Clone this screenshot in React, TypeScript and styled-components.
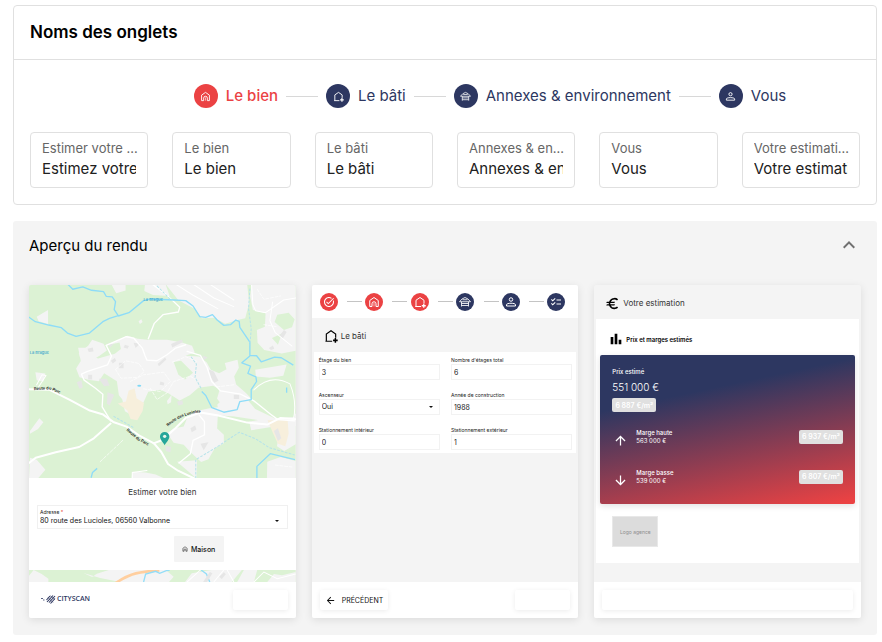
import React from "react";
import styled, { createGlobalStyle } from "styled-components";
import {
  MdArrowBack,
  MdArrowDownward,
  MdArrowUpward,
  MdBarChart,
  MdChecklist,
  MdEuro,
  MdKeyboardArrowUp,
  MdTaskAlt,
} from "react-icons/md";

const NAVY = "#2d3761";
const RED = "#eb4243";
const LINE = "#e0e0e0";
const GREY = "#f4f4f4";

const GlobalStyle = createGlobalStyle`
  *, *::before, *::after { box-sizing: border-box; }
  body { margin: 0; background: #fff; color: #000; }
  body, button, input, select { font-family: Inter, "Open Sans", sans-serif; }
  h1, h2, h3, p, dl, dd, dt, ol { margin: 0; padding: 0; }
`;

const Page = styled.main`
  display: flex;
  flex-direction: column;
  gap: 16px;
  padding: 5px 5px 7px 13px;
`;

/* ---------- Tab names ---------- */

const Card = styled.section`
  border: 1px solid ${LINE};
  border-radius: 4px;
  background: #fff;
`;

const CardTitle = styled.h1`
  padding: 0 16px;
  border-bottom: 1px solid ${LINE};
  font-size: 17px;
  line-height: 53px;
  font-weight: 600;
`;

const CardBody = styled.div`
  padding: 24px 16px 16px;
`;

const Steps = styled.ol`
  display: flex;
  align-items: center;
  justify-content: center;
  gap: 8px;
  padding-left: 90px;
  margin-bottom: 24px;
  list-style: none;
`;

const Step = styled.li<{ $active?: boolean }>`
  display: flex;
  align-items: center;
  gap: 8px;
  color: ${(p) => (p.$active ? RED : NAVY)};
  font-size: 15px;
  line-height: 24px;
  font-weight: ${(p) => (p.$active ? 500 : 400)};
  white-space: nowrap;

  &:not(:first-child)::before {
    content: "";
    width: 32px;
    height: 1px;
    background: #d8d8d8;
  }
`;

const Dot = styled.span<{ $size: number; $red?: boolean }>`
  display: flex;
  flex: none;
  align-items: center;
  justify-content: center;
  width: ${(p) => p.$size}px;
  height: ${(p) => p.$size}px;
  border-radius: 50%;
  color: #fff;
  background: ${(p) => (p.$red ? RED : NAVY)};
`;

const Fields = styled.div`
  display: grid;
  grid-template-columns: repeat(6, minmax(0, 1fr));
  gap: 24px;
`;

const TabField = styled.label`
  display: flex;
  flex-direction: column;
  height: 56px;
  padding: 6px 11px;
  border: 1px solid ${LINE};
  border-radius: 4px;
`;

const TabLabel = styled.span`
  margin-right: -3px;
  overflow: hidden;
  color: #666;
  font-size: 13px;
  line-height: 19px;
  white-space: nowrap;
  text-overflow: ellipsis;
`;

const TabInput = styled.input`
  width: 100%;
  height: 20px;
  padding: 0;
  border: 0;
  outline: 0;
  background: transparent;
  color: #212121;
  font-size: 15px;
`;

/* ---------- Preview panel ---------- */

const Panel = styled.section`
  padding: 0 16px 17px;
  border-radius: 3px;
  background: ${GREY};
`;

const PanelHeader = styled.h2`
  font-size: 15px;
  font-weight: 400;
`;

const PanelToggle = styled.button`
  display: flex;
  align-items: center;
  justify-content: space-between;
  width: 100%;
  height: 48px;
  padding: 0;
  border: 0;
  background: none;
  color: #000;
  font-size: 15px;
  font-weight: 400;
  cursor: pointer;

  svg { color: #707070; }
`;

const Previews = styled.div`
  display: grid;
  grid-template-columns: repeat(3, minmax(0, 1fr));
  gap: 16px;
  padding-top: 16px;
`;

const Phone = styled.article`
  display: flex;
  flex-direction: column;
  min-height: 333px;
  border-radius: 2px;
  background: ${GREY};
  box-shadow: 0 2px 8px rgba(0, 0, 0, 0.1);
  overflow: hidden;
`;

const PhoneFooter = styled.footer`
  display: flex;
  align-items: center;
  justify-content: space-between;
  height: 36px;
  margin-top: auto;
  padding: 0 8px;
  background: #fff;
`;

const SoftButton = styled.button<{ $width?: string }>`
  display: flex;
  align-items: center;
  gap: 6px;
  width: ${(p) => p.$width ?? "auto"};
  height: 20px;
  padding: 0 5px;
  border: 0;
  border-radius: 2px;
  background: #fff;
  box-shadow: 0 1px 5px rgba(0, 0, 0, 0.08);
  color: #111;
  font-size: 7px;
`;

const MapTop = styled.svg`
  display: block;
  width: 100%;
  height: 193px;
`;

const MapStrip = styled.svg`
  display: block;
  width: 100%;
  height: 12px;
`;

const AddressForm = styled.div`
  display: flex;
  flex-direction: column;
  height: 92px;
  padding: 7px 8px 8px;
  background: #fff;
`;

const AddressTitle = styled.h3`
  color: #333;
  font-size: 8px;
  line-height: 14px;
  font-weight: 400;
  text-align: center;
`;

const AddressField = styled.label`
  display: grid;
  height: 24px;
  margin: 6px 0 7px;
  padding: 2px;
  border: 1px solid #f0f0f0;
  color: #222;
  font-size: 5px;
  line-height: 8px;

  em { color: ${RED}; font-style: normal; }
`;

const SelectWrap = styled.span`
  display: flex;
  align-items: center;

  svg { flex: none; margin-right: 6px; }
`;

const BareSelect = styled.select`
  flex: 1;
  min-width: 0;
  padding: 0;
  border: 0;
  outline: 0;
  appearance: none;
  background: transparent;
  color: #111;
  font-size: 7px;
  line-height: 10px;
`;

const TypeButton = styled.button`
  display: flex;
  align-items: center;
  justify-content: center;
  align-self: flex-end;
  gap: 3px;
  width: 50px;
  height: 27px;
  margin-right: 64px;
  padding: 0;
  border: 0;
  border-radius: 1px;
  background: ${GREY};
  color: #111;
  font-size: 7px;
  font-weight: 500;
`;

const Brand = styled.span`
  display: flex;
  align-items: center;
  gap: 1px;
  padding: 0 0 3px 4px;
  color: ${NAVY};
  font-family: "Open Sans", sans-serif;
  font-size: 7px;
  line-height: 10px;
  font-weight: 600;
`;

const MiniSteps = styled.ol`
  display: flex;
  align-items: center;
  justify-content: space-between;
  height: 33px;
  padding: 0 13px 0 8px;
  background: #fff;
  list-style: none;
`;

const MiniLine = styled.li`
  width: 15px;
  height: 1px;
  margin-left: 6px;
  background: #c4c4c4;
`;

const PhoneTitle = styled.h3<{ $wide?: boolean }>`
  display: flex;
  align-items: center;
  gap: 3px;
  height: 34px;
  padding: 2px ${(p) => (p.$wide ? 11 : 12)}px 0;
  color: #333;
  font-size: 8px;
  font-weight: 400;

  svg { color: #000; }
`;

const MiniForm = styled.div`
  display: grid;
  grid-template-columns: 1fr 1fr;
  gap: 11px;
  margin: 0 2px;
  padding: 4px 4px 3px 5px;
  background: #fff;
`;

const MiniField = styled.label`
  display: grid;
  grid-template-rows: 8px 16px;
  color: #222;
  font-size: 5px;
  line-height: 8px;
`;

const MiniBox = styled.span`
  display: flex;
  align-items: center;
  min-width: 0;
  padding: 0 2px;
  border: 1px solid #f2f2f2;

  svg { flex: none; margin-right: 4px; }
`;

const MiniInput = styled.input`
  width: 100%;
  height: 12px;
  padding: 0;
  border: 0;
  outline: 0;
  background: transparent;
  color: #222;
  font-size: 7px;
`;

const Report = styled.div`
  margin: 0 2px;
  padding: 0 4px 16px;
  background: #fff;
`;

const ReportTitle = styled.h4`
  display: flex;
  align-items: center;
  gap: 2px;
  height: 36px;
  margin: 0;
  padding: 4px 8px 0;
  font-size: 6px;
  font-weight: 600;
`;

const PriceCard = styled.div`
  height: 149px;
  padding: 12px;
  border-radius: 2px;
  background: linear-gradient(168deg, ${NAVY} 28%, ${RED} 98%);
  box-shadow: 0 2px 6px rgba(0, 0, 0, 0.12);
  color: #fff;
`;

const PriceLabel = styled.p`
  font-size: 6px;
  line-height: 10px;
  font-weight: 500;
`;

const Price = styled.p`
  font-size: 10px;
  line-height: 21px;
  font-weight: 300;
`;

const Badge = styled.span`
  display: flex;
  align-items: center;
  justify-content: center;
  width: 44px;
  height: 14px;
  border-radius: 2px;
  background: #e0e0e0;
  color: #fff;
  font-size: 7px;
  font-weight: 600;
  white-space: nowrap;
`;

const Margins = styled.div`
  display: grid;
  gap: 24px;
  padding-top: 13px;
`;

const Margin = styled.div`
  display: grid;
  grid-template-columns: 24px 1fr auto;
  align-items: center;
  height: 16px;
  font-size: 6px;
  line-height: 8px;

  > svg { margin: 8px 0 0 1px; }
  strong { display: block; font-weight: 500; }
`;

const AgencyLogo = styled.div`
  display: flex;
  align-items: center;
  justify-content: center;
  width: 46px;
  height: 31px;
  margin: 12px 0 0 12px;
  border: 1px solid #e8e8e8;
  background: #dcdcdc;
  color: #8d8d8d;
  font-size: 5px;
`;

/* ---------- Icons ---------- */

type IconProps = { size: number };

const Glyph = ({ size, children }: IconProps & { children: React.ReactNode }) => (
  <svg
    width={size}
    height={size}
    viewBox="0 0 24 24"
    fill="none"
    stroke="currentColor"
    strokeWidth="2"
    aria-hidden="true"
  >
    {children}
  </svg>
);

const HouseIcon = ({ size }: IconProps) => (
  <Glyph size={size}>
    <path d="M3.500 21V9L12 3l8.500 6v12H16v-5.500a4 4 0 0 0-8 0V21z" />
    <path d="M12 14v7" strokeWidth="1.200" />
  </Glyph>
);

const HousePlusIcon = ({ size }: IconProps) => (
  <Glyph size={size}>
    <path d="M14 21H2.500M4 21V8.500L12 3l8 5.500V15" />
    <path d="M19.500 15.500v8M15.500 19.500h8" strokeWidth="2.600" />
  </Glyph>
);

const AnnexIcon = ({ size }: IconProps) => (
  <Glyph size={size}>
    <path d="M1 11.500 6 6l6-3 6 3 5 5.500H1zM5 11.500V21M19 11.500V21M5 15h14M5 19h14M7 7.500h10" strokeWidth="1.700" />
  </Glyph>
);

const PersonIcon = ({ size }: IconProps) => (
  <Glyph size={size}>
    <circle cx="12" cy="7" r="3.500" />
    <path d="M3 20v-2.500c0-2 4-3 9-3s9 1 9 3V20z" />
  </Glyph>
);

const Caret = () => (
  <svg width="4" height="2" viewBox="0 0 4 2" aria-hidden="true">
    <path d="M0 0h4L2 2z" fill="#111" />
  </svg>
);

const BrandMark = () => (
  <svg width="15" height="10" viewBox="0 0 15 10" aria-hidden="true" stroke={NAVY} fill="none">
    <path d="M0 4.500h2M2 6h1.500" strokeWidth="0.800" />
    <path d="M5.500 6 9 2M6 8l6-6.500M8 8.500l6-6.500M9.500 9.500 14 4.500" strokeWidth="1.100" />
    <path d="m7 3.500 5 5M9 1.500l5 4" strokeWidth="0.500" />
  </svg>
);

/* ---------- Map ---------- */

const AreaMap = () => (
  <MapTop viewBox="27 30 798 580" preserveAspectRatio="xMidYMid slice" role="img" aria-label="Carte de Valbonne">
    <defs>
      <path id="road-west" d="M42 346L88 343L128 360" />
      <path id="road-park" d="M318 466L350 494L392 517" />
      <path id="road-lucioles" d="M443 455Q480 418 548 411" />
    </defs>
    <rect x="27" y="30" width="798" height="580" fill="#dcf2d4" />
    <g fill="#f4f4f4">
      <path d="M252 213l40-16 30-14 30 9 28 3h60l45 8 30 10 8 20-28 10 42 2 22 18 12 22 25 10 22-12-5-18 38-10 4 24-14 26 6 24 30 26 42 44 40 12 98 8v18l-45 22-50-2-40-20-80-12-50-4-2 40 20 18v26l-28 16-18 32-22 8-32-30-20-22-30-6-20-28 20-14 30-6 12-30 24-16 38-8 28-4-4-20 10-34-20-10-44 6-26 22-30 16-34-22-24-10-36 6-22 48-20 26-28-16-8-36-10-12-6-42-38-24-16 24-32-4-26-8-10-26 14-22-8-40h44l2 28 14 4 50-14 18-14-4-20z" />
      <path d="M176 235l28-22 12-18 34 12 10 20-22 16-26 16-32-10z" />
      <path d="M437 30h243l6 55-12 46-20 4-40 12-32-18-38 2-20-28-50-26zM693 30h132v198l-42 8-52-10-20-22-2-38 24-10 2-40-38-10-8-40z" />
      <path d="M374 30h62l12 34-50-3-26-12zM274 30h42v18l-28 8zM50 126l34-20v42l-28-8zM355 140l8-6 4 8-8 6zM46 292l30 4-6 24-20-4z" />
      <path d="M30 468l28-38 12 12-16 20-24 14zM30 548l20 6 26 30-22 26H27zM704 285l94-16-10 34-40 6-42-4zM780 450l45-22v80l-34 20-22-14zM740 560l40-14 45 12v52h-86zM686 440l60-10 6 26-60 10z" />
      <path d="M440 378l14-18-2 22-10 6zM336 590l40 2 30 6 26 12h-98zM470 560l60-4-2 54z" />
    </g>
    <g fill="#dcf2d4">
      <path d="M704 350l28-30 50-2 32 28 8 80-60 4-58-28-20-24z" />
      <path d="M770 120l34-6 18 20-8 24-24 8-28-24zM460 262l22-4 36 36-24 20-20-14zM548 350l20-8 30 40-20 18-36-20zM754 190l30-14-12 34z" />
    </g>
    <g fill="#f7efdc">
      <path d="M325 348l18-8 6 30 22 14-4 24-16 28-20-4-10-26-28-20 24-6z" />
      <path d="M741 436h60l3 40-10 38-22-8-14-30z" />
    </g>
    <g fill="#e6e6e6">
      <path d="M452 208l32-14 4 8-32 16zM314 210l12 4-4 8-12-4zM262 206l18 2-10 10zM340 204l20 2-14 14zM412 268l22-20 4 6-22 20zM296 264h14v16h-14zM272 258l12-8 4 8-10 8zM204 300h12v14h-12zM170 322l14-6 4 22-10 4zM236 312h24l8 20-16 2zM566 284l14 6 14 28-12 6-16-22zM546 242l16 6-12 8zM640 360h16v12h-16zM262 352l20 8-14 32-8-6zM420 320l12 4-2 8-12-2zM540 506l24-4-14 24zM776 184l14-18 8 6-12 20zM745 220l12-8 4 10-10 4zM436 512l16 4-2 16-14-4zM470 380l16-4 2 12-14 4zM510 460l14-8 4 12-14 8zM202 222l16-4 2 12-14 2zM760 468l12-8 10 30-10 8z" />
    </g>
    <g fill="none" stroke="#fff" strokeLinejoin="round" strokeLinecap="round">
      <path strokeWidth="6" d="M27 343l62 2 60 30 60 32 40 12 30 22 40 14 40 28 42 22 22 26 20 36 30 20 50 24" />
      <path strokeWidth="6" d="M27 564l20-16 60-16 70-16 44-26 50-44M400 505l26-10 40-36 30-30 44-16 50 8 90 22 60 6 40-20 66 6" />
      <path strokeWidth="4" d="M262 270l-60 20-18 8 8 18 34 24 22 18-2 38 16 26 10 16M262 270l12-26-16-32 60-26 22 4 26 30 8 22 6 14 30 2 30-18 26-20 30-10M500 230l40 12 20 36 14 42 26 28 60 10 40 20 50 40 22 16 50 4M398 30l40 30 40 38-4 14-46 8-26 26-18 46M536 420l16 20v40l-34 16-8 40-34 28" />
      <path strokeWidth="3" d="M468 30l50 32 74 40M520 30l60 40 60 26M570 30l70 46M693 30l4 60 8 18 30 6 20-14 34-24 36-6M756 82l-8 56 16 36 50 40M700 345q50-50 108-18 22 54 10 108M50 330l16-30 12 2-22 34M336 610v-18l44-6" />
      <path strokeWidth="2" strokeDasharray="9 5" d="M286 284l30-26 40 8 16 24-20 18-50 2zM330 320l40-20 60-8 20 28-30 30-50-8M390 340l20 34 30-20 20-34 50-16 20 14M456 262l40-16 34 14M640 330l-50 6M710 44l20 30 50-10M730 150l40 6M240 560l70-66M764 570l50 6" />
    </g>
    <g fill="none" stroke="#8edcf8" strokeWidth="4" strokeLinejoin="round">
      <path d="M144 30l14 14 30-7 26 10 36 4 8 14 18 2 10 14-4 24 12 18-26 8-20 10-40 34-40 10-26-10-18-16-38-8-40-10-20-14M294 124l32-10 44-36 20-5 70 3 36 2 22 16 20 32 18 2 20-8 14 16 20 16 20-2 16-14 10 4 2 18 30 44v40l20 1 14 18 40-14 20 2 36 22M688 244l-24 20 26 10-8 22 24 10 2 14-16 24v30l-34 6-8 24-40 8-36-14-18-36-12-12" />
      <path d="M709 610v-36l40-38 74 18M213 608l4-16 14-12M798 338v16" />
    </g>
    <g fill="none" stroke="#b5e3ea" strokeWidth="3" strokeDasharray="8 4">
      <path d="M688 42l-4 60 8 60-4 50M512 246l16 22-4 40 20 36M280 424l60 34M526 610v-56l60-36 70-46 50 20 40 26 76 22M410 34l40 40" />
    </g>
    <ellipse cx="357" cy="333" rx="6" ry="3" fill="#7fd8f6" />
    <g fontFamily="Inter, sans-serif" fontSize="12" fontWeight="600">
      <g fill="#222">
        <text><textPath href="#road-west">Route du Parc</textPath></text>
        <text><textPath href="#road-park">Route du Parc</textPath></text>
        <text><textPath href="#road-lucioles">Route des Lucioles</textPath></text>
      </g>
      <g fill="#3aa5cc" fontWeight="500">
        <text x="370" y="80">La Brague</text>
        <text x="29" y="238">La Brague</text>
      </g>
    </g>
    <path d="M433 511c-5-10-14-16-14-27a14 13 0 0 1 28 0c0 11-9 17-14 27z" fill="#26a69a" />
    <circle cx="433" cy="484" r="5" fill="#e9f6ea" />
  </MapTop>
);

const LowerMap = () => (
  <MapStrip viewBox="27 301 798 36" preserveAspectRatio="xMidYMid slice" aria-hidden="true">
    <rect x="27" y="301" width="798" height="36" fill="#dcf2d4" />
    <path fill="#f4f4f4" d="M27 318l14-17 24 12 20 14v10H27zM190 310l26 12 14-10 36-11h170l24 20-14 16H300l-60-12zM494 337l20-26 60-10h90l-30 36zM670 301h40l-10 36h-50zM740 337l20-24 24 4 41-10v30z" />
    <path fill="none" stroke="#ffcf9f" strokeWidth="8" d="M285 341q36-24 62-30t70-9" />
    <path fill="none" stroke="#93ddf7" strokeWidth="4" d="M370 337l6-24 30-8 12 6 20-8 10-2M542 301l16 12 10 24" />
    <path fill="none" stroke="#fff" strokeWidth="3" d="M500 337l40-36M580 337l30-36M620 301l20 36M700 337l30-30 40 20 55-14" />
    <path fill="#e6e6e6" d="M548 337l20-30 8 4-16 26zM596 322l14-14 6 6-12 14z" />
  </MapStrip>
);

/* ---------- Data ---------- */

const steps = [
  { label: "Le bien", Icon: HouseIcon },
  { label: "Le bâti", Icon: HousePlusIcon },
  { label: "Annexes & environnement", Icon: AnnexIcon },
  { label: "Vous", Icon: PersonIcon },
];

const tabFields = [
  ["Estimer votre bien", "Estimez votre bien"],
  ["Le bien", "Le bien"],
  ["Le bâti", "Le bâti"],
  ["Annexes & environnement", "Annexes & environnement"],
  ["Vous", "Vous"],
  ["Votre estimation", "Votre estimation"],
];

const miniSteps = [MdTaskAlt, HouseIcon, HousePlusIcon, AnnexIcon, PersonIcon, MdChecklist];

const buildingFields = [
  { label: "Étage du bien", value: "3" },
  { label: "Nombre d'étages total", value: "6" },
  { label: "Ascenseur", value: "Oui", select: true },
  { label: "Année de construction", value: "1988" },
  { label: "Stationnement intérieur", value: "0" },
  { label: "Stationnement extérieur", value: "1" },
];

const margins = [
  { label: "Marge haute", price: "563 000 €", rate: "6 937 €/m²", Icon: MdArrowUpward },
  { label: "Marge basse", price: "539 000 €", rate: "6 807 €/m²", Icon: MdArrowDownward },
];

export default function App() {
  return (
    <>
      <GlobalStyle />
      <Page>
        <Card>
          <CardTitle>Noms des onglets</CardTitle>
          <CardBody>
            <Steps>
              {steps.map(({ label, Icon }, i) => (
                <Step key={label} $active={i === 0}>
                  <Dot $size={24} $red={i === 0}>
                    <Icon size={11} />
                  </Dot>
                  {label}
                </Step>
              ))}
            </Steps>
            <Fields>
              {tabFields.map(([label, value]) => (
                <TabField key={label}>
                  <TabLabel>{label}</TabLabel>
                  <TabInput defaultValue={value} />
                </TabField>
              ))}
            </Fields>
          </CardBody>
        </Card>

        <Panel>
          <PanelHeader>
            <PanelToggle aria-expanded="true">
              Aperçu du rendu
              <MdKeyboardArrowUp size={24} />
            </PanelToggle>
          </PanelHeader>
          <Previews>
            <Phone>
              <AreaMap />
              <AddressForm>
                <AddressTitle>Estimer votre bien</AddressTitle>
                <AddressField>
                  <span>
                    Adresse <em>*</em>
                  </span>
                  <SelectWrap>
                    <BareSelect>
                      <option>80 route des Lucioles, 06560 Valbonne</option>
                    </BareSelect>
                    <Caret />
                  </SelectWrap>
                </AddressField>
                <TypeButton>
                  <HouseIcon size={6} />
                  Maison
                </TypeButton>
              </AddressForm>
              <LowerMap />
              <PhoneFooter>
                <Brand>
                  <BrandMark />
                  CITYSCAN
                </Brand>
                <SoftButton $width="55px" aria-label="Suivant" />
              </PhoneFooter>
            </Phone>

            <Phone>
              <MiniSteps>
                {miniSteps.map((Icon, i) => (
                  <React.Fragment key={i}>
                    {i > 0 && <MiniLine aria-hidden="true" />}
                    <li>
                      <Dot $size={18} $red={i < 3}>
                        <Icon size={12} />
                      </Dot>
                    </li>
                  </React.Fragment>
                ))}
              </MiniSteps>
              <PhoneTitle>
                <HousePlusIcon size={14} />
                Le bâti
              </PhoneTitle>
              <MiniForm>
                {buildingFields.map(({ label, value, select }) => (
                  <MiniField key={label}>
                    {label}
                    <MiniBox>
                      {select ? (
                        <>
                          <BareSelect>
                            <option>{value}</option>
                          </BareSelect>
                          <Caret />
                        </>
                      ) : (
                        <MiniInput defaultValue={value} />
                      )}
                    </MiniBox>
                  </MiniField>
                ))}
              </MiniForm>
              <PhoneFooter>
                <SoftButton>
                  <MdArrowBack size={11} />
                  PRÉCÉDENT
                </SoftButton>
                <SoftButton $width="55px" aria-label="Suivant" />
              </PhoneFooter>
            </Phone>

            <Phone>
              <PhoneTitle $wide>
                <MdEuro size={15} />
                Votre estimation
              </PhoneTitle>
              <Report>
                <ReportTitle>
                  <MdBarChart size={16} />
                  Prix et marges estimés
                </ReportTitle>
                <PriceCard>
                  <PriceLabel>Prix estimé</PriceLabel>
                  <Price>551 000 €</Price>
                  <Badge>6 887 €/m²</Badge>
                  <Margins>
                    {margins.map(({ label, price, rate, Icon }) => (
                      <Margin key={label}>
                        <Icon size={15} />
                        <span>
                          <strong>{label}</strong>
                          {price}
                        </span>
                        <Badge>{rate}</Badge>
                      </Margin>
                    ))}
                  </Margins>
                </PriceCard>
                <AgencyLogo>Logo agence</AgencyLogo>
              </Report>
              <PhoneFooter>
                <SoftButton $width="100%" aria-label="Continuer" />
              </PhoneFooter>
            </Phone>
          </Previews>
        </Panel>
      </Page>
    </>
  );
}
